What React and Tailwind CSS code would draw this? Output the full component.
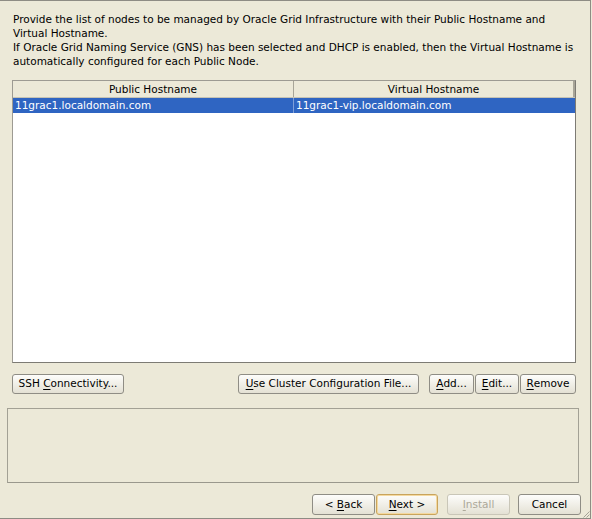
import React from 'react'

const Btn = ({ children, className = '', variant = 'normal' }) => {
  const look =
    variant === 'default'
      ? 'border-[#c9a45c] shadow-[inset_0_0_0_1px_#f4d9a0] text-black'
      : variant === 'disabled'
        ? 'border-[#c9c6b8] text-[#aca899]'
        : 'border-[#8f8d85] text-black'
  return (
    <div
      className={`flex shrink-0 items-center justify-center rounded-[3px] border bg-gradient-to-b from-[#fdfdfb] to-[#e4e1d4] ${look} ${className}`}
    >
      {children}
    </div>
  )
}

const U = ({ children }) => <span className="underline underline-offset-[1.5px]">{children}</span>

export default function App() {
  return (
    <div className="h-[519px] w-[592px] bg-[#ECE9D8]">
      <div className="relative flex h-full w-[591px] flex-col border-t border-r border-b border-[#8e8c84] font-['DejaVu_Sans',sans-serif] text-[10.5px] text-black">
        {/* description */}
        <div className="shrink-0 pl-[13px] pt-[11px] leading-[14px]">
          <div>Provide the list of nodes to be managed by Oracle Grid Infrastructure with their Public Hostname and</div>
          <div>Virtual Hostname.</div>
          <div>If Oracle Grid Naming Service (GNS) has been selected and DHCP is enabled, then the Virtual Hostname is</div>
          <div>automatically configured for each Public Node.</div>
        </div>

        {/* node table */}
        <div className="ml-[12px] mt-[12px] flex h-[283px] w-[564px] shrink-0 flex-col border border-[#9d9b93] border-r-[#7d7b74] border-b-[#7d7b74] bg-white">
          <div className="flex h-[17px] border-b border-[#c6c3b4] bg-[#ECE9D8] leading-[16px]">
            <div className="w-[281px] border-r border-[#a8a598] text-center">Public Hostname</div>
            <div className="flex-1 border-r-2 border-[#a8a598] text-center">Virtual Hostname</div>
          </div>
          <div className="flex h-[15px] bg-[#2f65c2] leading-[15px] text-white">
            <div className="w-[281px] border-r border-[#7f9fd9] pl-[2px]">11grac1.localdomain.com</div>
            <div className="flex-1 pl-[2px]">11grac1-vip.localdomain.com</div>
          </div>
        </div>

        {/* table actions */}
        <div className="ml-[12px] mt-[11px] flex h-[20px] shrink-0">
          <Btn className="w-[112px]">
            SSH&nbsp;<U>C</U>onnectivity...
          </Btn>
          <Btn className="ml-[114px] w-[181px]">
            <U>U</U>se Cluster Configuration File...
          </Btn>
          <Btn className="ml-[10px] w-[45px]">
            <U>A</U>dd...
          </Btn>
          <Btn className="ml-[1px] w-[44px]">
            <U>E</U>dit...
          </Btn>
          <Btn className="ml-[1px] w-[56px]">
            <U>R</U>emove
          </Btn>
        </div>

        {/* message pane */}
        <div className="ml-[7px] mt-[14px] h-[75px] w-[572px] shrink-0 border border-[#a3a195] border-b-[#9a988d]" />

        {/* wizard buttons */}
        <div className="mt-[11px] flex h-[21px] shrink-0">
          <Btn className="ml-[312px] w-[63px]">
            &lt;&nbsp;<U>B</U>ack
          </Btn>
          <Btn variant="default" className="ml-[1px] w-[62px]">
            <U>N</U>ext&nbsp;&gt;
          </Btn>
          <Btn variant="disabled" className="ml-[9px] w-[63px]">
            <U>I</U>nstall
          </Btn>
          <Btn className="ml-[8px] w-[63px]">Cancel</Btn>
        </div>

        {/* resize grip */}
        <svg width="7" height="7" viewBox="0 0 7 7" className="absolute bottom-0 right-0">
          <path d="M6.5 0.5 L0.5 6.5 M6.5 3.5 L3.5 6.5" stroke="#a5a297" strokeWidth="1" />
        </svg>
      </div>
    </div>
  )
}
